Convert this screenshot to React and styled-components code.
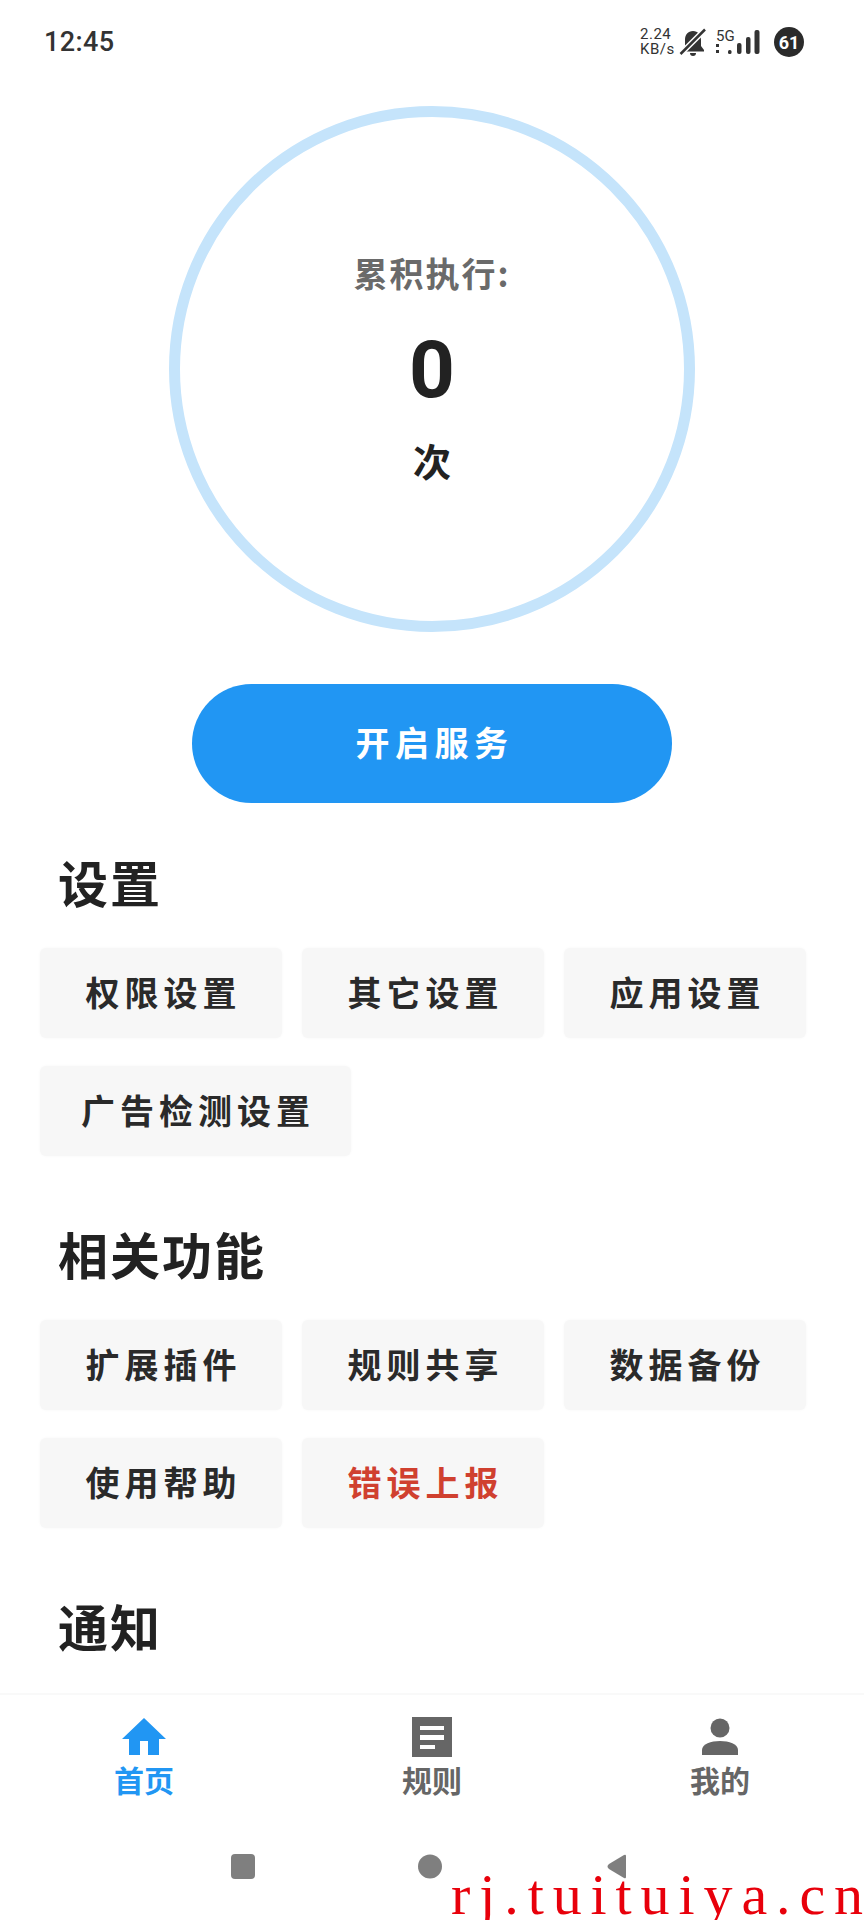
import React from "react";
import styled, { createGlobalStyle } from "styled-components";

const CJK = `"Noto Sans CJK SC", "Noto Sans", sans-serif`;

const Global = createGlobalStyle`
  html, body { margin: 0; padding: 0; background: #fff; }
  * { box-sizing: border-box; }
`;

const Screen = styled.div`
  position: relative;
  width: 864px;
  height: 1920px;
  display: flex;
  flex-direction: column;
  overflow: hidden;
  background: #fff;
  font-family: ${CJK};
`;

const StatusBar = styled.div`
  height: 84px;
  flex: none;
  display: flex;
  align-items: center;
  justify-content: space-between;
  padding: 0 60px 0 44px;
  color: #333;
`;

const Time = styled.span`
  font-family: Roboto, sans-serif;
  font-size: 27px;
  font-weight: 500;
  letter-spacing: 0.4px;
`;

const StatusIcons = styled.div`
  display: flex;
  align-items: center;
`;

const Speed = styled.div`
  font-family: Roboto, sans-serif;
  font-size: 15px;
  line-height: 15px;
  letter-spacing: 0.5px;
  text-align: center;
  width: 31px;
  margin-right: 8px;
`;

const Signal = styled.svg`
  display: block;
  margin-left: 9px;
  fill: #333;
`;

const Badge = styled.span`
  width: 30px;
  height: 30px;
  margin-left: 14px;
  border-radius: 50%;
  background: #2b2b2b;
  color: #fff;
  display: flex;
  align-items: center;
  justify-content: center;
  font-family: Roboto, sans-serif;
  font-size: 18px;
  font-weight: 700;
`;

const Main = styled.main`
  flex: 1;
  min-height: 0;
  overflow: hidden;
`;

const Ring = styled.div`
  width: 526px;
  height: 526px;
  margin: 22px auto 0;
  border: 11px solid #c5e4fb;
  border-radius: 50%;
  display: flex;
  flex-direction: column;
  align-items: center;
  justify-content: center;
`;

const RingLabel = styled.div`
  font-size: 34px;
  line-height: 46px;
  font-weight: 700;
  letter-spacing: 2px;
  color: #6a6a6a;
  margin-bottom: 20px;
`;

const RingCount = styled.div`
  font-family: Roboto, sans-serif;
  font-size: 80px;
  line-height: 100px;
  font-weight: 700;
  color: #222;
  margin-top: 4px;
`;

const RingUnit = styled.div`
  font-size: 38px;
  line-height: 50px;
  font-weight: 700;
  color: #222;
  margin-top: 15px;
  margin-bottom: 3px;
`;

const StartButton = styled.button`
  display: block;
  width: 480px;
  height: 119px;
  margin: 52px auto 0;
  padding: 0 0 4px 5px;
  border: none;
  border-radius: 60px;
  background: #2196f3;
  color: #fff;
  font-family: ${CJK};
  font-size: 34px;
  font-weight: 700;
  letter-spacing: 5.5px;
`;

const Section = styled.section`
  margin-top: ${(p) => p.$top}px;
  padding: 0 40px;
`;

const Title = styled.h2`
  margin: 0 0 37px 18px;
  font-size: 50px;
  line-height: 60px;
  font-weight: 700;
  letter-spacing: 2px;
  color: #222;
`;

const Chips = styled.div`
  display: flex;
  flex-wrap: wrap;
  gap: 28px 20px;
`;

const Chip = styled.div`
  min-width: 242px;
  height: 90px;
  padding: 0 36px 4px 41px;
  display: flex;
  align-items: center;
  justify-content: center;
  border-radius: 6px;
  background: #f7f7f7;
  box-shadow: 0 0 3px #f7f7f7;
  font-size: 34px;
  font-weight: 700;
  letter-spacing: 5px;
  color: ${(p) => (p.$danger ? "#d0402f" : "#2a2a2a")};
`;

const TabBar = styled.nav`
  flex: none;
  height: 132px;
  display: grid;
  grid-template-columns: repeat(3, 1fr);
  border-top: 2px solid #f9f9f9;
  padding-top: 22px;
`;

const Tab = styled.div`
  display: flex;
  flex-direction: column;
  align-items: center;
  color: ${(p) => (p.$active ? "#2196f3" : "#666")};
`;

const TabIcon = styled.svg`
  display: block;
  width: 44px;
  height: 42px;
  fill: currentColor;
`;

const TabLabel = styled.span`
  font-size: 30px;
  line-height: 40px;
  font-weight: 700;
`;

const SystemNav = styled.div`
  flex: none;
  height: 95px;
  display: flex;
  justify-content: center;
  gap: 163px;
  padding: 29px 4px 0 0;
`;

const SysIcon = styled.svg`
  display: block;
  width: 24px;
  height: 25px;
  fill: #7f7f7f;
`;

const Watermark = styled.div`
  position: absolute;
  left: 451px;
  top: 1865px;
  font-family: "Liberation Serif", serif;
  font-size: 58px;
  line-height: 60px;
  letter-spacing: 8.9px;
  color: #e8000b;
  white-space: nowrap;
`;

const settings = ["权限设置", "其它设置", "应用设置", "广告检测设置"];
const features = ["扩展插件", "规则共享", "数据备份", "使用帮助", "错误上报"];

export default function App() {
  return (
    <Screen>
      <Global />
      <StatusBar>
        <Time>12:45</Time>
        <StatusIcons>
          <Speed>
            2.24
            <br />
            KB/s
          </Speed>
          <svg width="28" height="28" viewBox="0 0 28 28" fill="#333">
            <path d="M14 3c-5 0-8 3.600-8 9v6l-3 4v1.500h22V22l-3-4v-6c0-5.400-3-9-8-9z" />
            <path d="M11 25h6a3 3 0 0 1-6 0z" />
            <path d="M1.500 26 26 1.500" stroke="#fff" strokeWidth="5.500" />
            <path d="M1.500 26 26 1.500" stroke="#333" strokeWidth="2.500" />
          </svg>
          <Signal width="44" height="30" viewBox="0 0 44 30">
            <text x="0" y="14" fontFamily="Roboto, sans-serif" fontSize="15">5G</text>
            <rect x="0" y="17" width="3" height="3" />
            <rect x="0" y="23" width="3" height="3" />
            <rect x="12" y="23" width="3.500" height="4" rx="1.500" />
            <rect x="21" y="16" width="4.500" height="11" rx="2" />
            <rect x="30" y="10" width="4.500" height="17" rx="2" />
            <rect x="38.500" y="3" width="5" height="24" rx="2" />
          </Signal>
          <Badge>61</Badge>
        </StatusIcons>
      </StatusBar>

      <Main>
        <Ring>
          <RingLabel>累积执行:</RingLabel>
          <RingCount>0</RingCount>
          <RingUnit>次</RingUnit>
        </Ring>
        <StartButton>开启服务</StartButton>

        <Section $top={48}>
          <Title>设置</Title>
          <Chips>
            {settings.map((s) => (
              <Chip key={s}>{s}</Chip>
            ))}
          </Chips>
        </Section>

        <Section $top={67}>
          <Title>相关功能</Title>
          <Chips>
            {features.map((s) => (
              <Chip key={s} $danger={s === "错误上报"}>{s}</Chip>
            ))}
          </Chips>
        </Section>

        <Section $top={67}>
          <Title>通知</Title>
        </Section>
      </Main>

      <TabBar>
        <Tab $active>
          <TabIcon viewBox="0 0 44 42" preserveAspectRatio="none">
            <path d="M22 1 0 22h7v16h11V24h8v14h11V22h7z" />
          </TabIcon>
          <TabLabel>首页</TabLabel>
        </Tab>
        <Tab>
          <TabIcon viewBox="0 0 44 42">
            <path fillRule="evenodd" d="M2 0h40v40H2zM10 9v4h24V9zM10 18v5h24v-5zM10 28v4h15v-4z" />
          </TabIcon>
          <TabLabel>规则</TabLabel>
        </Tab>
        <Tab>
          <TabIcon viewBox="0 0 44 42">
            <ellipse cx="22" cy="11" rx="9.500" ry="9.500" />
            <path d="M4 38v-5c0-6 9-9 18-9s18 3 18 9v5z" />
          </TabIcon>
          <TabLabel>我的</TabLabel>
        </Tab>
      </TabBar>

      <SystemNav>
        <SysIcon viewBox="0 0 24 25">
          <rect width="24" height="25" rx="4" />
        </SysIcon>
        <SysIcon viewBox="0 0 24 25">
          <circle cx="12" cy="12.500" r="12" />
        </SysIcon>
        <SysIcon viewBox="0 0 24 25">
          <path d="M21 2v21q0 2-2 1L4 15q-3-2.500 0-5L19 1q2-1 2 1z" />
        </SysIcon>
      </SystemNav>

      <Watermark>rj.tuituiya.cn</Watermark>
    </Screen>
  );
}
